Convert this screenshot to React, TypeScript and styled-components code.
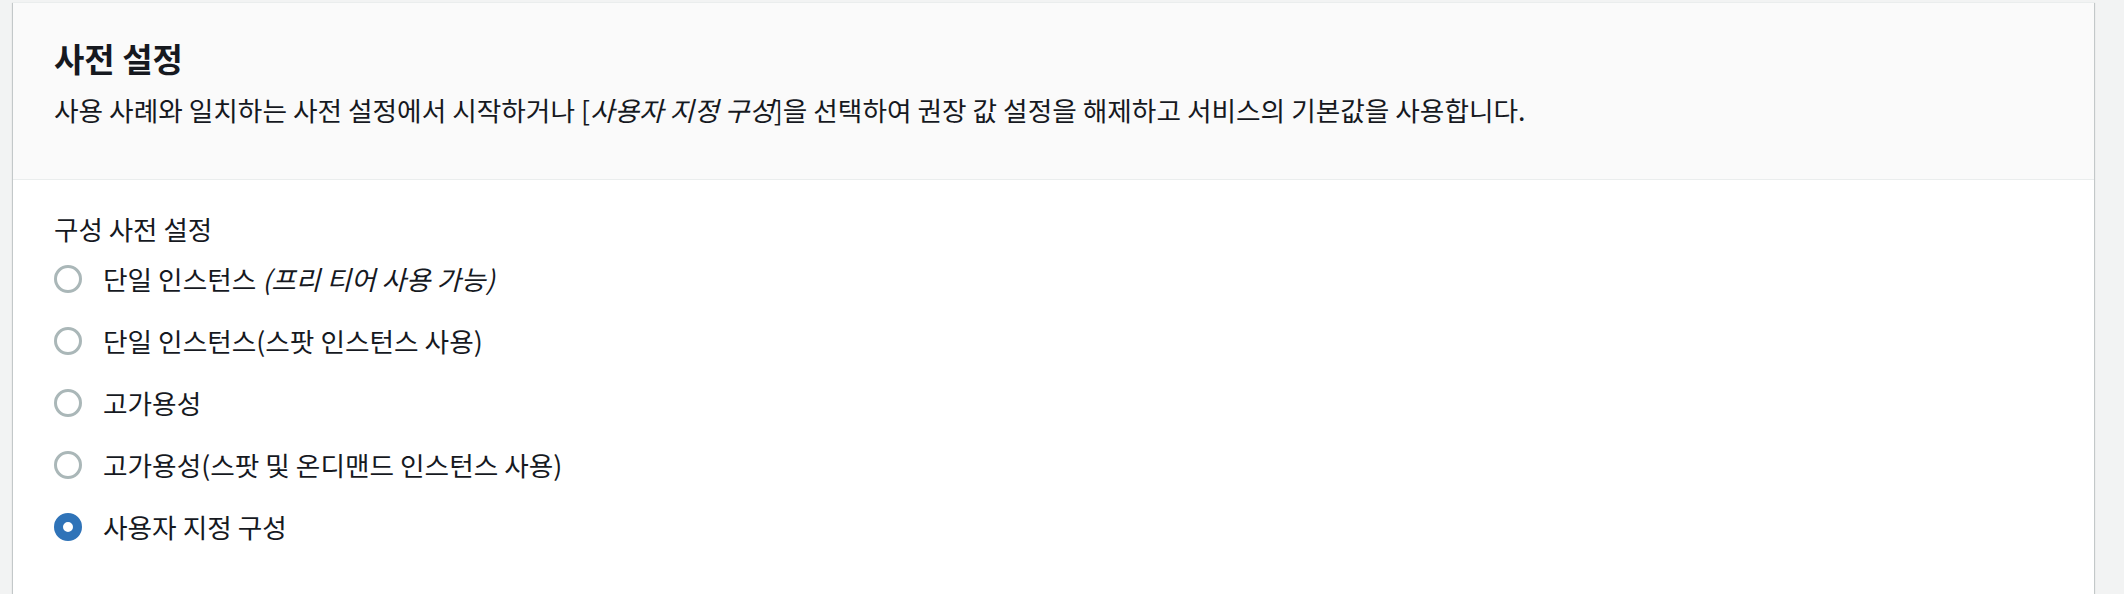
import React from "react";
import styled, { createGlobalStyle } from "styled-components";

const GlobalStyle = createGlobalStyle`
  html, body {
    margin: 0;
    padding: 0;
    background: #f2f3f3;
  }
  body {
    font-family: "Noto Sans CJK KR", "Noto Sans", sans-serif;
    color: #16191f;
  }
`;

const Page = styled.div`
  padding: 2px 30px 0 13px;
  height: 594px;
  overflow: hidden;
  box-sizing: border-box;
`;

const Card = styled.section`
  background: #ffffff;
  border-top: 1px solid #eaeded;
  box-shadow: 0 1px 1px 0 rgba(0, 28, 36, 0.3),
    1px 1px 1px 0 rgba(0, 28, 36, 0.15),
    -1px 1px 1px 0 rgba(0, 28, 36, 0.15);
`;

const Header = styled.header`
  background: #fafafa;
  border-bottom: 1px solid #eaeded;
  padding: 35px 40px 52px 41px;
  display: flex;
  flex-direction: column;
  gap: 15px;
`;

const Title = styled.h2`
  margin: 0;
  font-size: 33px;
  line-height: 40px;
  font-weight: 700;
  color: #16191f;
`;

const Description = styled.p`
  margin: 0;
  font-size: 26.7px;
  line-height: 34px;
  color: #16191f;
`;

const Em = styled.em`
  font-style: italic;
`;

const Body = styled.div`
  padding: 32px 40px 80px 41px;
`;

const FieldLabel = styled.div`
  font-size: 26.5px;
  line-height: 34px;
  margin-bottom: 16px;
`;

const RadioList = styled.div`
  display: flex;
  flex-direction: column;
  gap: 28px;
`;

const RadioRow = styled.label`
  display: flex;
  align-items: center;
  gap: 21px;
  font-size: 26.7px;
  line-height: 34px;
  cursor: pointer;
`;

const RadioCircle = styled.span<{ $checked: boolean }>`
  box-sizing: border-box;
  width: 28px;
  height: 28px;
  border-radius: 50%;
  flex: 0 0 auto;
  background: #ffffff;
  border: ${(p) => (p.$checked ? "9.5px solid #2f73b8" : "3px solid #aab7b8")};
`;

const options: { label: React.ReactNode; checked: boolean }[] = [
  {
    label: (
      <>
        단일 인스턴스 <Em>(프리 티어 사용 가능)</Em>
      </>
    ),
    checked: false,
  },
  { label: "단일 인스턴스(스팟 인스턴스 사용)", checked: false },
  { label: "고가용성", checked: false },
  { label: "고가용성(스팟 및 온디맨드 인스턴스 사용)", checked: false },
  { label: "사용자 지정 구성", checked: true },
];

export default function App() {
  return (
    <>
      <GlobalStyle />
      <Page>
        <Card>
          <Header>
            <Title>사전 설정</Title>
            <Description>
              사용 사례와 일치하는 사전 설정에서 시작하거나 [<Em>사용자 지정 구성</Em>]을 선택하여
              권장 값 설정을 해제하고 서비스의 기본값을 사용합니다.
            </Description>
          </Header>
          <Body>
            <FieldLabel>구성 사전 설정</FieldLabel>
            <RadioList>
              {options.map((o, i) => (
                <RadioRow key={i}>
                  <RadioCircle $checked={o.checked} />
                  <span>{o.label}</span>
                </RadioRow>
              ))}
            </RadioList>
          </Body>
        </Card>
      </Page>
    </>
  );
}
